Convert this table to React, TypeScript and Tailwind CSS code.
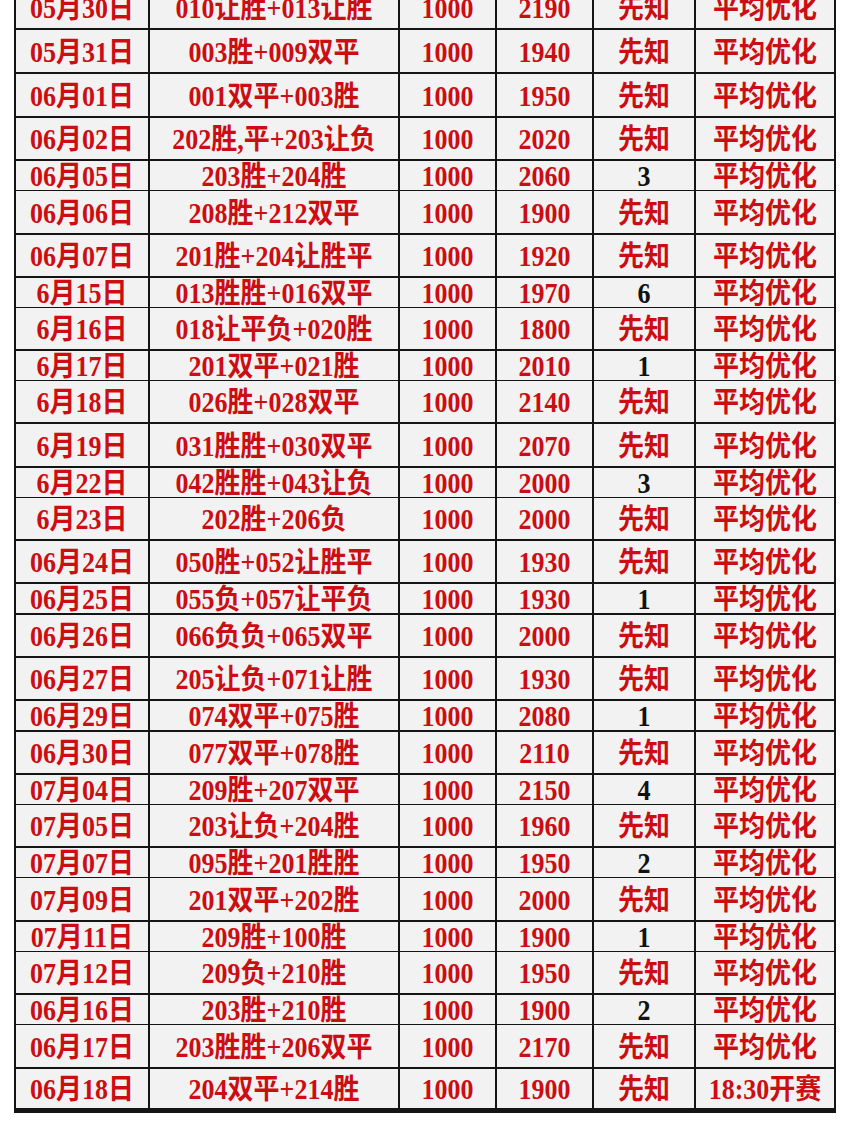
import React from "react";

type Row = {
  d: string;
  c: string;
  a: string;
  r: string;
  k: string;
  last?: string;
  h: string;
};

const rows: Row[] = [
  { d: "05月30日", c: "010让胜+013让胜", a: "1000", r: "2190", k: "先知", h: "h-[41px]" },
  { d: "05月31日", c: "003胜+009双平", a: "1000", r: "1940", k: "先知", h: "h-[42px]" },
  { d: "06月01日", c: "001双平+003胜", a: "1000", r: "1950", k: "先知", h: "h-[42px]" },
  { d: "06月02日", c: "202胜,平+203让负", a: "1000", r: "2020", k: "先知", h: "h-[41px]" },
  { d: "06月05日", c: "203胜+204胜", a: "1000", r: "2060", k: "3", h: "h-[28px]" },
  { d: "06月06日", c: "208胜+212双平", a: "1000", r: "1900", k: "先知", h: "h-[42px]" },
  { d: "06月07日", c: "201胜+204让胜平", a: "1000", r: "1920", k: "先知", h: "h-[41px]" },
  { d: "6月15日", c: "013胜胜+016双平", a: "1000", r: "1970", k: "6", h: "h-[28px]" },
  { d: "6月16日", c: "018让平负+020胜", a: "1000", r: "1800", k: "先知", h: "h-[41px]" },
  { d: "6月17日", c: "201双平+021胜", a: "1000", r: "2010", k: "1", h: "h-[28px]" },
  { d: "6月18日", c: "026胜+028双平", a: "1000", r: "2140", k: "先知", h: "h-[41px]" },
  { d: "6月19日", c: "031胜胜+030双平", a: "1000", r: "2070", k: "先知", h: "h-[42px]" },
  { d: "6月22日", c: "042胜胜+043让负", a: "1000", r: "2000", k: "3", h: "h-[28px]" },
  { d: "6月23日", c: "202胜+206负", a: "1000", r: "2000", k: "先知", h: "h-[41px]" },
  { d: "06月24日", c: "050胜+052让胜平", a: "1000", r: "1930", k: "先知", h: "h-[41px]" },
  { d: "06月25日", c: "055负+057让平负", a: "1000", r: "1930", k: "1", h: "h-[29px]" },
  { d: "06月26日", c: "066负负+065双平", a: "1000", r: "2000", k: "先知", h: "h-[41px]" },
  { d: "06月27日", c: "205让负+071让胜", a: "1000", r: "1930", k: "先知", h: "h-[41px]" },
  { d: "06月29日", c: "074双平+075胜", a: "1000", r: "2080", k: "1", h: "h-[29px]" },
  { d: "06月30日", c: "077双平+078胜", a: "1000", r: "2110", k: "先知", h: "h-[41px]" },
  { d: "07月04日", c: "209胜+207双平", a: "1000", r: "2150", k: "4", h: "h-[28px]" },
  { d: "07月05日", c: "203让负+204胜", a: "1000", r: "1960", k: "先知", h: "h-[41px]" },
  { d: "07月07日", c: "095胜+201胜胜", a: "1000", r: "1950", k: "2", h: "h-[28px]" },
  { d: "07月09日", c: "201双平+202胜", a: "1000", r: "2000", k: "先知", h: "h-[42px]" },
  { d: "07月11日", c: "209胜+100胜", a: "1000", r: "1900", k: "1", h: "h-[28px]" },
  { d: "07月12日", c: "209负+210胜", a: "1000", r: "1950", k: "先知", h: "h-[41px]" },
  { d: "06月16日", c: "203胜+210胜", a: "1000", r: "1900", k: "2", h: "h-[28px]" },
  { d: "06月17日", c: "203胜胜+206双平", a: "1000", r: "2170", k: "先知", h: "h-[42px]" },
  { d: "06月18日", c: "204双平+214胜", a: "1000", r: "1900", k: "先知", last: "18:30开赛", h: "h-[39px]" },
];

const cell =
  "bg-[#f2f2f2] flex items-center justify-center leading-none whitespace-nowrap pt-[3px]";

function T({ children }: { children: React.ReactNode }) {
  return <span className="inline-block scale-y-110">{children}</span>;
}

export default function App() {
  return (
    <div
      className="w-[850px] h-[1127px] bg-white overflow-hidden pl-[14px] font-bold text-[26px] text-[#cc0d12]"
      style={{ fontFamily: '"Liberation Serif", "Noto Sans CJK SC", serif' }}
    >
      <div className="w-[822px] -mt-[13px] bg-[#141414] px-[2px] pb-[5px] flex flex-col gap-y-[2px]">
        {rows.map((row, i) => {
          const black = row.k !== "先知";
          return (
            <div
              key={i}
              className={`grid grid-cols-[132px_248px_95px_95px_100px_138px] gap-x-[2px] ${row.h}`}
            >
              <div className={cell}><T>{row.d}</T></div>
              <div className={cell}><T>{row.c}</T></div>
              <div className={cell}><T>{row.a}</T></div>
              <div className={cell}><T>{row.r}</T></div>
              <div className={`${cell} ${black ? "text-[#111]" : ""}`}><T>{row.k}</T></div>
              <div className={cell}><T>{row.last ?? "平均优化"}</T></div>
            </div>
          );
        })}
      </div>
    </div>
  );
}
